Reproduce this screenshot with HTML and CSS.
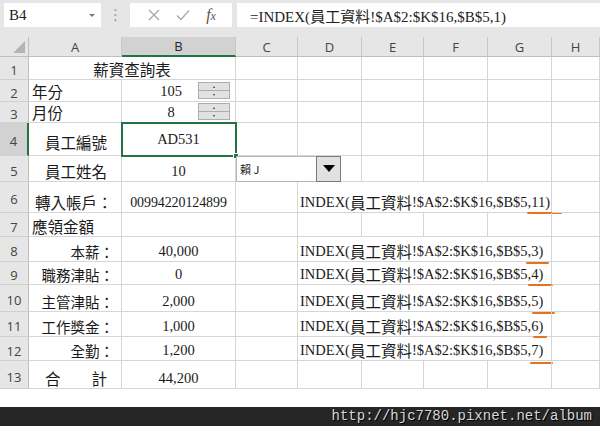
FILE: index.html
```html
<!DOCTYPE html>
<html lang="zh-Hant">
<head>
<meta charset="utf-8">
<title>薪資查詢表</title>
<link rel="stylesheet" href="styles.css">
</head>
<body>
<div class="app">
  <div class="fbar">
    <div class="namebox"><span class="nb-text">B4</span><span class="nb-arrow"></span></div>
    <div class="grip">⋮</div>
    <div class="btnbox">
      <svg class="ico" width="12" height="12" viewBox="0 0 12 12"><path d="M1 1 L11 11 M11 1 L1 11" stroke="#a6a6a6" stroke-width="1.3" fill="none"/></svg>
      <svg class="ico" width="14" height="12" viewBox="0 0 14 12"><path d="M1 6.5 L5 10.5 L13 1.5" stroke="#a6a6a6" stroke-width="1.3" fill="none"/></svg>
      <span class="fx">f<span class="fx-x">x</span></span>
    </div>
    <div class="formula">=INDEX(<span class="cj">員工資料</span>!$A$2:$K$16,$B$5,1)</div>
  </div>

  <div class="sheet">
    <!-- header -->
    <div class="corner"><span class="tri"></span></div>
    <div class="hd">A</div><div class="hd sel">B</div><div class="hd">C</div><div class="hd">D</div><div class="hd">E</div><div class="hd">F</div><div class="hd">G</div><div class="hd">H</div>

    <!-- 1 -->
    <div class="rn">1</div>
    <div class="c ctr span2"><span class="cj">薪資查詢表</span></div>
    <div class="c"></div><div class="c"></div><div class="c"></div><div class="c"></div><div class="c"></div><div class="c"></div>

    <!-- 2 -->
    <div class="rn">2</div>
    <div class="c"><span class="cj">年分</span></div>
    <div class="c ctr spin-host">105<div class="spin"><span class="sp up"></span><span class="sp dn"></span></div></div>
    <div class="c"></div><div class="c"></div><div class="c"></div><div class="c"></div><div class="c"></div><div class="c"></div>

    <!-- 3 -->
    <div class="rn">3</div>
    <div class="c"><span class="cj">月份</span></div>
    <div class="c ctr spin-host">8<div class="spin s3"><span class="sp up"></span><span class="sp dn"></span></div></div>
    <div class="c"></div><div class="c"></div><div class="c"></div><div class="c"></div><div class="c"></div><div class="c"></div>

    <!-- 4 -->
    <div class="rn sel">4</div>
    <div class="c ind a4"><span class="cj">員工編號</span></div>
    <div class="c ctr mid selcell">AD531<span class="handle"></span></div>
    <div class="c"></div><div class="c"></div><div class="c"></div><div class="c"></div><div class="c"></div><div class="c"></div>

    <!-- 5 -->
    <div class="rn">5</div>
    <div class="c ind"><span class="cj">員工姓名</span></div>
    <div class="c ctr">10</div>
    <div class="c combo-host"><div class="combo"><span class="combo-text">賴 J</span><span class="combo-btn"><span class="dtri"></span></span></div></div>
    <div class="c"></div><div class="c"></div><div class="c"></div><div class="c"></div><div class="c"></div>

    <!-- 6 -->
    <div class="rn">6</div>
    <div class="c ind2"><span class="cj">轉入帳戶：</span></div>
    <div class="c ctr acct">00994220124899</div>
    <div class="c"></div>
    <div class="c span4 f">INDEX(<span class="cj">員工資料</span>!$A$2:$K$16,$B$5<span class="u u6">,11)</span></div>
    <div class="c"></div>

    <!-- 7 -->
    <div class="rn">7</div>
    <div class="c"><span class="cj">應領金額</span></div>
    <div class="c"></div><div class="c"></div><div class="c"></div><div class="c"></div><div class="c"></div><div class="c"></div><div class="c"></div>

    <!-- 8 -->
    <div class="rn">8</div>
    <div class="c r"><span class="cj sm">本薪：</span></div>
    <div class="c ctr">40,000</div>
    <div class="c"></div>
    <div class="c span4 f">INDEX(<span class="cj">員工資料</span>!$A$2:$K$16,$B$5<span class="u u8">,3)</span></div>
    <div class="c"></div>

    <!-- 9 -->
    <div class="rn">9</div>
    <div class="c r"><span class="cj sm">職務津貼：</span></div>
    <div class="c ctr">0</div>
    <div class="c"></div>
    <div class="c span4 f">INDEX(<span class="cj">員工資料</span>!$A$2:$K$16,$B$5<span class="u u9">,4)</span></div>
    <div class="c"></div>

    <!-- 10 -->
    <div class="rn">10</div>
    <div class="c r"><span class="cj sm">主管津貼：</span></div>
    <div class="c ctr">2,000</div>
    <div class="c"></div>
    <div class="c span4 f">INDEX(<span class="cj">員工資料</span>!$A$2:$K$16,$B$5<span class="u u10">,5)</span></div>
    <div class="c"></div>

    <!-- 11 -->
    <div class="rn">11</div>
    <div class="c r"><span class="cj sm">工作獎金：</span></div>
    <div class="c ctr">1,000</div>
    <div class="c"></div>
    <div class="c span4 f">INDEX(<span class="cj">員工資料</span>!$A$2:$K$16,$B$5<span class="u u11">,6)</span></div>
    <div class="c"></div>

    <!-- 12 -->
    <div class="rn">12</div>
    <div class="c r"><span class="cj sm">全勤：</span></div>
    <div class="c ctr">1,200</div>
    <div class="c"></div>
    <div class="c span4 f">INDEX(<span class="cj">員工資料</span>!$A$2:$K$16,$B$5<span class="u u12">,7)</span></div>
    <div class="c"></div>

    <!-- 13 -->
    <div class="rn">13</div>
    <div class="c ind"><span class="cj">合　　計</span></div>
    <div class="c ctr">44,200</div>
    <div class="c"></div><div class="c"></div><div class="c"></div><div class="c"></div><div class="c"></div><div class="c"></div>
  </div>

  <div class="spacer"></div>
  <div class="footer">http://hjc7780.pixnet.net/album</div>
</div>
</body>
</html>
```
FILE: styles.css
```css
* { box-sizing: border-box; }
html, body { margin: 0; padding: 0; background: #ffffff; }
body { width: 600px; height: 426px; overflow: hidden; }

.app { display: flex; flex-direction: column; width: 600px; height: 426px; }

/* formula bar */
.fbar {
  height: 37px;
  background: #e6e6e6;
  display: flex;
  align-items: flex-start;
  padding-top: 3px;
  padding-left: 4px;
  flex: none;
}
.namebox {
  width: 97px; height: 24px; background: #fff;
  display: flex; align-items: center; justify-content: space-between;
  padding: 0 6px 0 5px;
  font-family: "Liberation Serif", serif; font-size: 15px; color: #222;
}
.nb-arrow {
  width: 0; height: 0;
  border-left: 3px solid transparent; border-right: 3px solid transparent;
  border-top: 3px solid #777;
}
.grip {
  width: 29px; text-align: center; color: #9a9a9a; font-family: "DejaVu Sans", sans-serif;
  font-size: 15px; line-height: 24px;
}
.btnbox {
  width: 102px; height: 24px; background: #fff;
  display: flex; align-items: center; justify-content: space-around;
  padding: 0 8px 0 10px;
}
.fx {
  font-family: "Liberation Serif", serif; font-style: italic; font-size: 16px; color: #555;
  line-height: 1;
}
.fx-x { font-size: 12px; }
.formula {
  margin-left: 5px; flex: 1; height: 24px; background: #fff;
  padding-left: 13px;
  font-family: "Liberation Serif", serif; font-size: 15px; line-height: 25px; color: #222;
  white-space: nowrap;
}
.cj { font-family: "Noto Sans CJK TC", sans-serif; font-size: 15.5px; }
.formula .cj { font-size: 15px; }

/* sheet grid */
.sheet {
  display: grid;
  grid-template-columns: 29px 93px 114px 62px 64px 62px 64px 64px 48px;
  grid-template-rows: 20px 23px 22px 21px 33px 26px 31px 24px 25px 23px 27px 25px 24px 28px;
  flex: none;
  position: relative;
  font-family: "Liberation Serif", "Noto Sans CJK TC", serif;
  font-size: 14.5px;
  color: #1a1a1a;
}
.corner {
  background: #e6e6e6;
  border-right: 1px solid #bfbfbf; border-bottom: 1px solid #bfbfbf;
  position: relative;
}
.tri {
  position: absolute; right: 3px; bottom: 3px; width: 0; height: 0;
  border-left: 12px solid transparent; border-bottom: 12px solid #b4b4b4;
}
.hd {
  background: #e6e6e6;
  border-right: 1px solid #c8c8c8; border-bottom: 1px solid #bfbfbf;
  display: flex; align-items: center; justify-content: center;
  font-family: "Open Sans", "Noto Sans", sans-serif; font-size: 13px; color: #444;
}
.hd.sel { background: #d2d2d2; border-bottom: 2px solid #217346; color: #262626; }
.rn {
  background: #e6e6e6;
  border-right: 1px solid #bfbfbf; border-bottom: 1px solid #d0d0d0;
  display: flex; align-items: center; justify-content: center;
  padding-top: 4px;
  font-family: "Open Sans", "Noto Sans", sans-serif; font-size: 13px; color: #444;
}
.rn.sel { background: #d2d2d2; border-right: 2px solid #217346; }

.c {
  border-right: 1px solid #d6d6d6; border-bottom: 1px solid #d6d6d6;
  display: flex; align-items: flex-end;
  padding: 0 3px 0 3px;
  white-space: nowrap;
  line-height: 19px;
  position: relative;
}
.c .cj { line-height: 19px; }
.ctr { justify-content: center; }
.r { justify-content: flex-end; padding-right: 7px; }
.ind { padding-left: 16px; }
.ind2 { padding-left: 6px; }
.a4 { padding-bottom: 3px; }
.mid { align-items: center; }
.span2 { grid-column: span 2; }
.span4 { grid-column: span 4; }
.f { padding-left: 2px; overflow: visible; }
.acct { font-size: 14px; letter-spacing: -0.1px; }
.sm { font-size: 14.5px; }

/* selected cell */
.selcell { outline: 2px solid #217346; outline-offset: -1px; z-index: 2; }
.handle {
  position: absolute; right: -4px; bottom: -4px; width: 6px; height: 6px;
  background: #217346; border: 1px solid #fff;
}

/* spin buttons */
.spin-host { padding-right: 18px; }
.spin {
  position: absolute; left: 76px; top: 2px; width: 32px; height: 17px;
  display: flex; flex-direction: column;
  background: #e1e1e1; border: 1px solid #adadad;
}
.spin.s3 { top: 1px; }
.sp { flex: 1; position: relative; }
.sp.up { border-bottom: 1px solid #adadad; }
.sp::after {
  content: ""; position: absolute; left: 14px; top: 3px; width: 0; height: 0;
  border-left: 1.5px solid transparent; border-right: 1.5px solid transparent;
}
.sp.up::after { border-bottom: 2px solid #333; }
.sp.dn::after { border-top: 2px solid #333; }

/* combo box */
.combo {
  position: absolute; left: 0; top: 0; width: 105px; height: 26px;
  background: #fff; border: 1px solid #b5b5b5; border-right: none;
  display: flex; align-items: center; justify-content: space-between;
  z-index: 3;
}
.combo-text {
  font-family: "Noto Sans CJK TC", sans-serif; font-size: 11px; padding-left: 3px; color: #222;
}
.combo-btn {
  width: 25px; height: 26px; background: #e1e1e1; border: 1px solid #7a7a7a;
  display: flex; align-items: center; justify-content: center;
  margin-top: -1px;
}
.dtri {
  width: 0; height: 0;
  border-left: 6px solid transparent; border-right: 6px solid transparent;
  border-top: 7px solid #000;
}

/* orange annotation underlines */
.u { position: relative; }
.u::after {
  content: ""; position: absolute; height: 2px; background: #e8731f; border-radius: 2px;
  left: 0; right: -13px; bottom: -3px;
}
.u6::after { left: -1px; right: -12px; bottom: -2px; }
.u8::after { left: -2px; right: -6px; bottom: -3px; }
.u9::after { left: 0px; right: -10px; bottom: -2px; }
.u10::after { left: 4px; right: -12px; bottom: -3px; }
.u11::after { left: 5px; right: -4px; bottom: -2px; }
.u12::after { left: 2px; right: -10px; bottom: -4px; }

.spacer { height: 18px; flex: none; }
.footer {
  flex: 1;
  background: #262626;
  color: #d8d8d8;
  font-family: "Liberation Mono", monospace;
  font-size: 14px;
  line-height: 19px;
  text-align: right;
  padding-right: 8px;
  text-shadow: 1px 1px 0 #000;
}
```
